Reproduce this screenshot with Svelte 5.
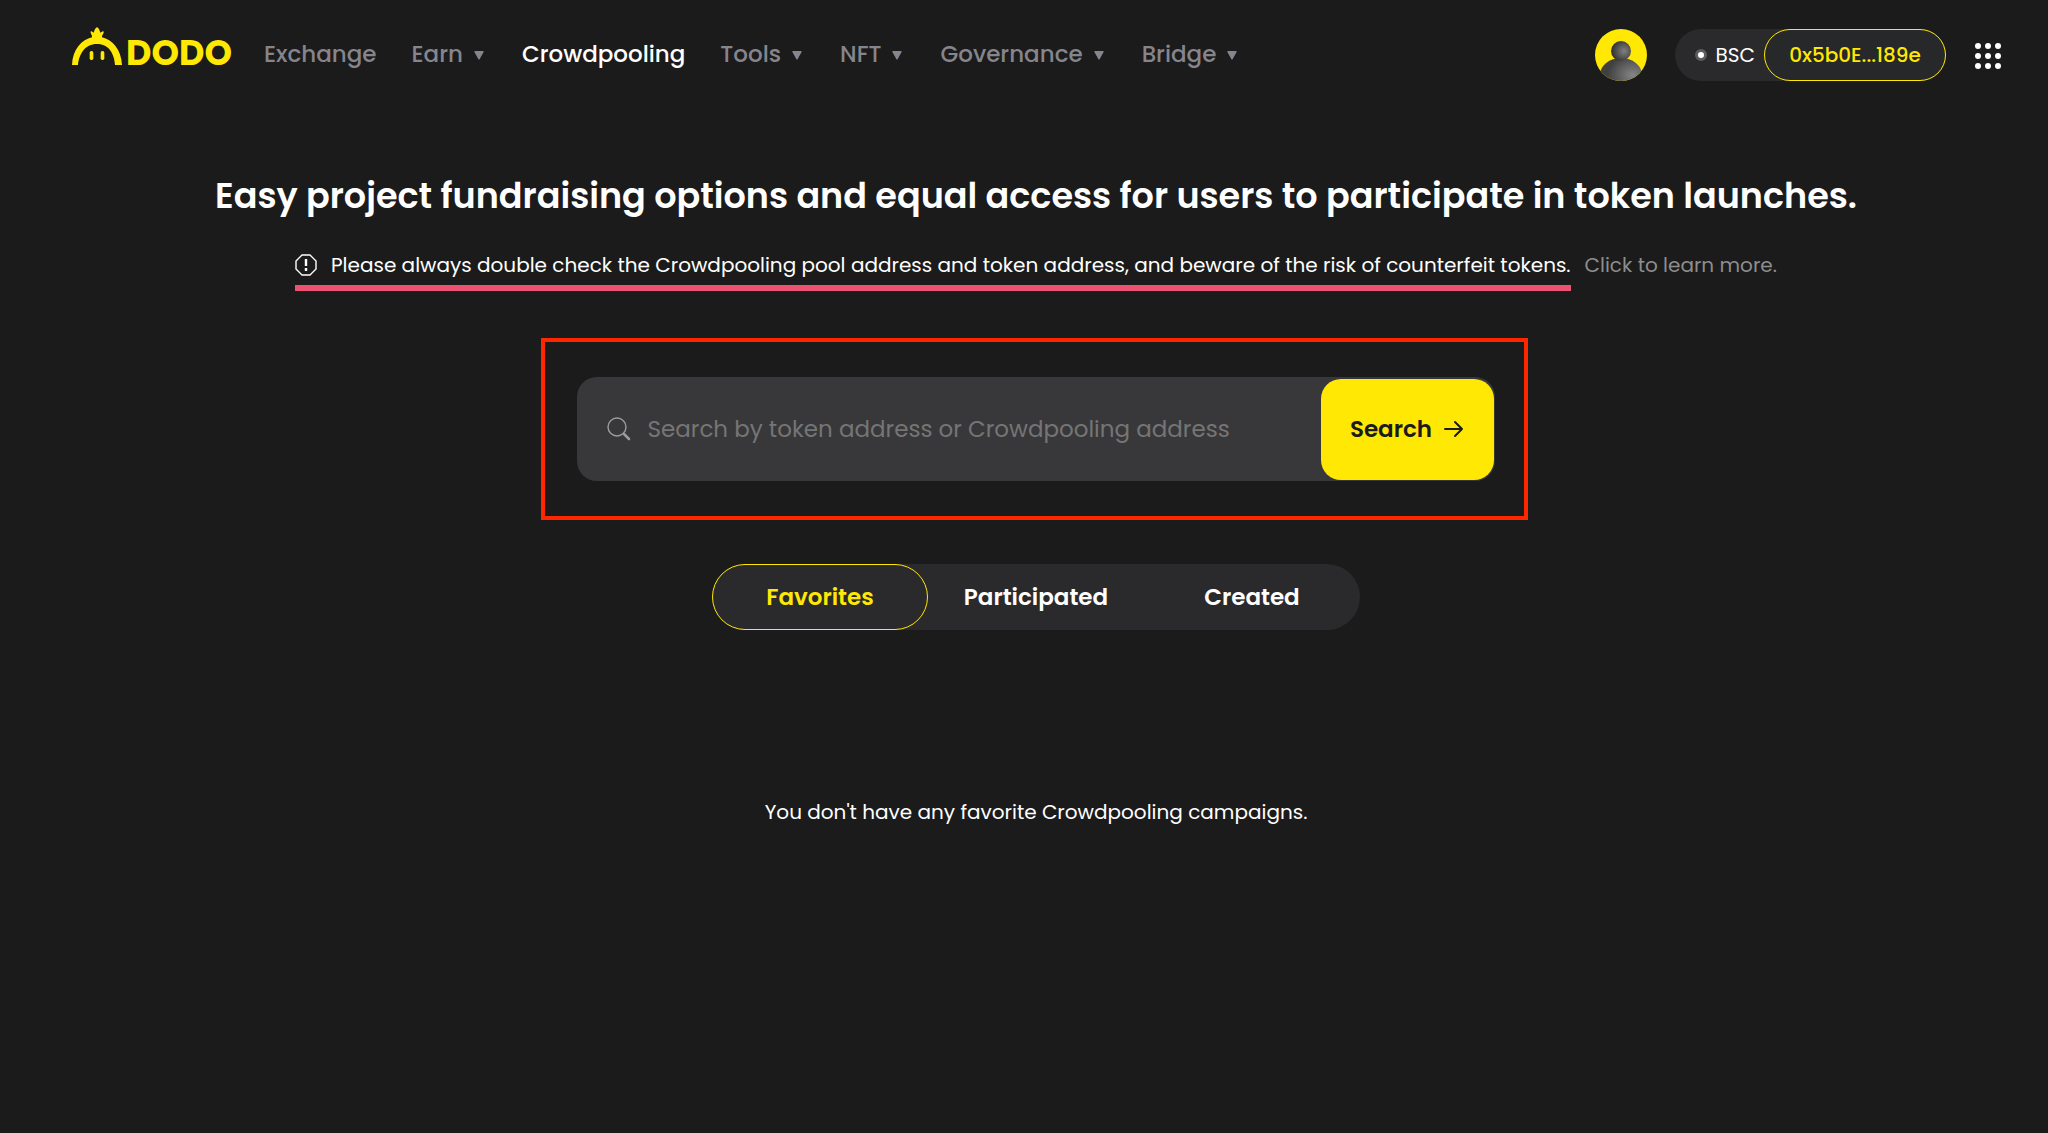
<script lang="ts">
    interface INavItem {
        label: string;
        menu?: boolean;
        active?: boolean;
    }

    const navItems: INavItem[] = [
        { label: 'Exchange' },
        { label: 'Earn', menu: true },
        { label: 'Crowdpooling', active: true },
        { label: 'Tools', menu: true },
        { label: 'NFT', menu: true },
        { label: 'Governance', menu: true },
        { label: 'Bridge', menu: true },
    ];

    const tabs = ['Favorites', 'Participated', 'Created'];
    const dots = [4, 14, 24];

    let selected = $state('Favorites');
    let query = $state('');
</script>

<header>
    <a class="logo" href="/" aria-label="DODO home">
        <svg width="50" height="38" viewBox="0 0 150 114" fill="currentColor" aria-hidden="true">
            <path d="M0 114C2 66 30 38 60 31V27L56 17Q55 12 59 13L65 17L68 8Q70 5 72 2Q75 -1 78 2Q80 5 82 8L85 17L92 13Q96 12 95 17L90 27V31C120 38 148 66 150 114H129C127 82 112 51 75 51S21 82 18 114Z" />
            <rect x="53" y="72" width="11" height="27" rx="5" />
            <rect x="86" y="72" width="11" height="27" rx="5" />
        </svg>
        <span>DODO</span>
    </a>

    <nav>
        {#each navItems as item}
            {#if item.menu}
                <button type="button" class="nav-item">
                    {item.label}
                    <svg width="10" height="12" viewBox="0 0 10 12" fill="currentColor" aria-hidden="true">
                        <path d="M1 3H9Q10 3 9.600 4L5.600 11.200Q5 12 4.400 11.200L.4 4Q0 3 1 3Z" />
                    </svg>
                </button>
            {:else}
                <a href="/" class="nav-item" class:active={item.active}>{item.label}</a>
            {/if}
        {/each}
    </nav>

    <div class="account">
        <button type="button" class="avatar" aria-label="Profile">
            <svg width="52" height="52" viewBox="0 0 52 52" aria-hidden="true">
                <defs>
                    <radialGradient id="head" cx="0.65" cy="0.5" r="0.6">
                        <stop offset="0" stop-color="#808080" />
                        <stop offset="1" stop-color="#333333" />
                    </radialGradient>
                    <radialGradient id="torso" cx="0.78" cy="0.5" r="0.6">
                        <stop offset="0" stop-color="#858585" />
                        <stop offset="1" stop-color="#404040" />
                    </radialGradient>
                    <clipPath id="round"><circle cx="26" cy="26" r="26" /></clipPath>
                </defs>
                <g clip-path="url(#round)">
                    <rect width="52" height="52" fill="#ffe804" />
                    <ellipse cx="26" cy="46" rx="21" ry="17" fill="url(#torso)" />
                    <circle cx="26" cy="22" r="10" fill="url(#head)" />
                </g>
            </svg>
        </button>

        <div class="wallet">
            <button type="button" class="chain"><i></i>BSC</button>
            <button type="button" class="address">0x5b0E...189e</button>
        </div>

        <button type="button" class="apps" aria-label="More apps">
            <svg width="28" height="30" viewBox="0 0 28 30" fill="currentColor" aria-hidden="true">
                {#each dots as y}
                    {#each dots as x}
                        <circle cx={x} cy={y + 2} r="3" />
                    {/each}
                {/each}
            </svg>
        </button>
    </div>
</header>

<main>
    <h1>Easy project fundraising options and equal access for users to participate in token launches.</h1>

    <div class="notice">
        <p>
            <svg width="22" height="22" viewBox="0 0 22 22" fill="none" stroke="currentColor" aria-hidden="true">
                <path d="M7 1H15L21 7V15L15 21H7L1 15V7Z" stroke-width="1.400" stroke-linejoin="round" />
                <path d="M11 5V12M11 14V17" stroke-width="2.400" />
            </svg>
            Please always double check the Crowdpooling pool address and token address, and beware of the risk of counterfeit tokens.
        </p>
        <a href="/">Click to learn more.</a>
    </div>

    <div class="highlight">
        <form onsubmit={(event) => event.preventDefault()}>
            <label for="search" aria-label="Search campaigns">
                <svg width="24" height="24" viewBox="0 0 24 24" fill="none" stroke="currentColor" aria-hidden="true">
                    <circle cx="10" cy="10" r="9" stroke-width="1.400" />
                    <path d="M17 17L22 22" stroke-width="2.600" stroke-linecap="round" />
                </svg>
            </label>
            <input id="search" type="text" placeholder="Search by token address or Crowdpooling address" bind:value={query} />
            <button type="submit">
                Search
                <svg width="20" height="18" viewBox="0 0 20 18" fill="none" stroke="currentColor" stroke-width="2" stroke-linecap="round" stroke-linejoin="round" aria-hidden="true">
                    <path d="M1 9H18M11 2L18 9L11 16" />
                </svg>
            </button>
        </form>
    </div>

    <div class="tabs" role="tablist">
        {#each tabs as tab}
            <button
                type="button"
                role="tab"
                aria-selected={selected === tab}
                class:selected={selected === tab}
                onclick={() => (selected = tab)}
            >
                {tab}
            </button>
        {/each}
    </div>

    <p class="empty">You don't have any favorite Crowdpooling campaigns.</p>
</main>

<style>
    :global(body) {
        margin: 0;
        background: #1b1b1b;
        color: #ffffff;
        font-family: Poppins, Inter, "Noto Sans", sans-serif;
    }

    button,
    input {
        padding: 0;
        border: none;
        background: none;
        color: inherit;
        font: inherit;
    }

    button {
        cursor: pointer;
    }

    a {
        color: inherit;
        text-decoration: none;
    }

    svg {
        display: block;
        flex: none;
    }

    header {
        display: flex;
        align-items: center;
        height: 108px;
        padding: 0 46px 0 72px;
    }

    .logo {
        display: flex;
        align-items: flex-end;
        gap: 4px;
        height: 38px;
        margin-bottom: 16px;
        color: #ffe804;

        & span {
            font-size: 35px;
            font-weight: 700;
            line-height: 25px;
        }
    }

    nav {
        display: flex;
        gap: 35px;
        margin-left: 32px;
    }

    .nav-item {
        display: flex;
        align-items: center;
        gap: 11px;
        color: #86858d;
        font-size: 23px;
        font-weight: 500;
        line-height: 32px;
        white-space: nowrap;

        &.active {
            color: #ffffff;
        }

        & svg {
            margin-right: 3px;
        }
    }

    .account {
        display: flex;
        align-items: center;
        gap: 28px;
        margin-left: auto;
        padding-top: 2px;
    }

    .wallet {
        display: flex;
        height: 52px;
        border-radius: 26px;
        background: #2a2a2c;
        white-space: nowrap;
    }

    .chain {
        display: flex;
        align-items: center;
        gap: 9px;
        padding: 0 9px 0 20px;
        font-size: 20px;

        & i {
            width: 6px;
            height: 6px;
            border: 3px solid #5c5c5e;
            border-radius: 50%;
            background: #ffffff;
        }
    }

    .address {
        min-width: 182px;
        padding: 0 20px;
        border: 1px solid #ffe804;
        border-radius: 26px;
        background: #26282a;
        color: #ffe804;
        font-size: 20px;
        font-weight: 500;
    }

    main {
        display: flex;
        flex-direction: column;
        align-items: center;
        padding: 62px 24px 60px 48px;
    }

    h1 {
        margin: 0;
        font-size: 35px;
        font-weight: 600;
        line-height: 52px;
        text-align: center;
    }

    .notice {
        display: flex;
        gap: 14px;
        margin-top: 26px;
        font-size: 20px;
        line-height: 34px;

        & p {
            display: flex;
            align-items: center;
            gap: 14px;
            margin: 0;
            padding-bottom: 3px;
            border-bottom: 6px solid #ee5272;
        }

        & a {
            color: #8d8d8d;
        }
    }

    .highlight {
        box-sizing: border-box;
        width: 100%;
        max-width: 987px;
        margin: 47px 4px 0 0;
        padding: 35px 29px 35px 32px;
        border: 4px solid #ff2600;
    }

    form {
        display: flex;
        align-items: center;
        height: 102px;
        padding: 1px 1px 1px 30px;
        border-radius: 20px;
        background: #38383a;

        & label {
            color: #9b9b9c;
        }

        & input {
            flex: 1;
            min-width: 0;
            margin: 0 17px;
            outline: none;
            font-size: 23px;
        }

        & input::placeholder {
            color: #757575;
            opacity: 1;
        }

        & button {
            display: flex;
            align-items: center;
            justify-content: center;
            gap: 12px;
            width: 173px;
            height: 101px;
            border-radius: 20px;
            background: #ffe804;
            color: #1b1b1b;
            font-size: 23px;
            font-weight: 600;
        }
    }

    .tabs {
        display: flex;
        margin-top: 44px;
        border-radius: 33px;
        background: #2a2a2c;

        & button {
            width: 216px;
            height: 66px;
            border: 1px solid transparent;
            border-radius: 33px;
            font-size: 23px;
            font-weight: 600;
        }

        & button.selected {
            border-color: #ffe804;
            color: #ffe804;
        }
    }

    .empty {
        margin: 166px 0 0;
        font-size: 20px;
        line-height: 32px;
    }
</style>
